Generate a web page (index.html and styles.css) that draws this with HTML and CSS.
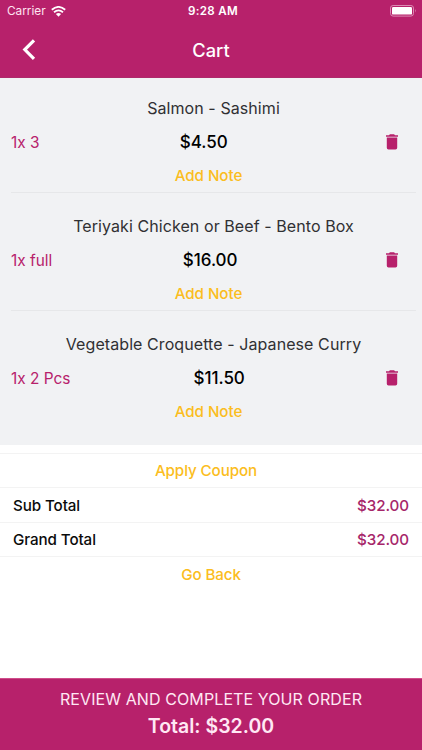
FILE: index.html
```html
<!DOCTYPE html>
<html lang="en">
<head>
<meta charset="utf-8">
<title>Cart</title>
<link rel="stylesheet" href="styles.css">
</head>
<body>
<svg class="defs" width="0" height="0"><symbol id="trash" viewBox="0 0 12 16"><path d="M0 1.2h3L3.9.3h4.2l.9.9h3v1.5H0zM.8 3.5h10.4v10.3q0 1.7-1.7 1.7h-7Q.8 15.5.8 13.8z"/></symbol></svg>
<header class="header">
  <div class="status">
    <div class="carrier"><span>Carrier</span>
      <svg class="wifi" width="15" height="11" viewBox="0 0 15 11"><path d="M.8 3.8Q7.5-2 14.2 3.8M3 6.2q4.5-3.7 9 0" fill="none" stroke="#fff" stroke-width="1.8"/><path d="M4.9 8.1q2.6-2 5.2 0L7.5 10.7z" fill="#fff"/></svg>
    </div>
    <span class="clock">9:28 AM</span>
    <svg class="battery" width="27" height="12" viewBox="0 0 27 12"><rect x=".5" y=".5" width="23" height="10.6" rx="2.6" fill="none" stroke="#dc8bb4"/><rect x="2" y="2" width="20" height="7.6" rx="1.2" fill="#fff"/><path d="M25 4q1.5 1.8 0 3.6z" fill="#dc8bb4"/></svg>
  </div>
  <div class="nav">
    <svg class="back" width="14" height="22" viewBox="0 0 14 22"><path d="M12 1.4L2.8 10.6l9.2 9.2" fill="none" stroke="#fff" stroke-width="3.2"/></svg>
    <h1 class="title">Cart</h1>
    <span></span>
  </div>
</header>
<main class="main">
  <section class="items">
    <article class="item">
      <h2 class="name">Salmon - Sashimi</h2>
      <div class="row"><span class="qty">1x 3</span><span class="price">$4.50</span><span class="remove"><svg width="12" height="16"><use href="#trash"/></svg></span></div>
      <div class="note">Add Note</div>
    </article>
    <article class="item">
      <h2 class="name">Teriyaki Chicken or Beef - Bento Box</h2>
      <div class="row"><span class="qty">1x full</span><span class="price">$16.00</span><span class="remove"><svg width="12" height="16"><use href="#trash"/></svg></span></div>
      <div class="note">Add Note</div>
    </article>
    <article class="item">
      <h2 class="name">Vegetable Croquette - Japanese Curry</h2>
      <div class="row"><span class="qty">1x 2 Pcs</span><span class="price">$11.50</span><span class="remove"><svg width="12" height="16"><use href="#trash"/></svg></span></div>
      <div class="note">Add Note</div>
    </article>
  </section>
  <section class="summary">
    <div class="coupon">Apply Coupon</div>
    <div class="line"><span>Sub Total</span><span class="amount">$32.00</span></div>
    <div class="line"><span>Grand Total</span><span class="amount">$32.00</span></div>
    <div class="goback">Go Back</div>
  </section>
</main>
<footer class="footer">
  <div class="review">REVIEW AND COMPLETE YOUR ORDER</div>
  <div class="total">Total: $32.00</div>
</footer>
</body>
</html>
```
FILE: styles.css
```css
* { box-sizing: border-box; }
body {
  margin: 0;
  width: 422px;
  height: 750px;
  overflow: hidden;
  display: flex;
  flex-direction: column;
  font-family: Inter, "Liberation Sans", sans-serif;
  font-feature-settings: "calt" 0;
  font-size: 15.2px;
  color: #0b0b0b;
  background: #fff;
}
.defs { display: block; height: 0; position: absolute; }
.header {
  height: 78px;
  background: #b7216b;
  color: #fff;
  border-bottom: 1px solid #ae2a6b;
}
.status {
  height: 22px;
  padding: 0 5px 0 7px;
  display: grid;
  grid-template-columns: 1fr auto 1fr;
  align-items: center;
  font-size: 12px;
}
.carrier { display: flex; align-items: center; gap: 5px; color: #ffe3f2; }
.carrier span { font-size: 11.8px; }
.clock { font-weight: 600; font-size: 11.6px; letter-spacing: .3px; padding-left: 2px; }
.battery { justify-self: end; }
.nav {
  height: 55px;
  padding: 0 22px;
  display: grid;
  grid-template-columns: 1fr auto 1fr;
  align-items: center;
}
.title { margin: 0; font-size: 18.3px; font-weight: 500; }
.main { flex: 1; }
.items { height: 367px; background: #f1f2f4; }
.item { position: relative; height: 118px; padding: 19px 6px 0 11px; }
.item:not(:last-child)::after {
  content: "";
  position: absolute;
  left: 11px;
  right: 6px;
  bottom: 3px;
  height: 1px;
  background: #e6e7e9;
}
.name {
  margin: 0;
  height: 22px;
  line-height: 22px;
  text-align: center;
  font-size: 16px;
  font-weight: 400;
  letter-spacing: .08px;
  color: #303033;
}
.row {
  height: 24px;
  margin-top: 11px;
  display: flex;
  justify-content: space-between;
  align-items: center;
}
.qty { color: #b7216b; font-size: 15.4px; }
.price { font-size: 17px; font-weight: 500; letter-spacing: -.05px; color: #000; }
.remove { width: 48px; display: flex; justify-content: center; fill: #b7216b; }
.note {
  height: 22px;
  margin-top: 11px;
  line-height: 22px;
  padding-right: 10px;
  text-align: center;
  font-weight: 500;
  letter-spacing: -.05px;
  color: #fbbd20;
}
.summary { padding-top: 8px; font-weight: 500; letter-spacing: -.1px; }
.coupon, .goback { text-align: center; color: #fbbd20; }
.coupon { height: 34px; line-height: 34px; padding-right: 10px; border-top: 1px solid #f3f3f3; }
.line {
  height: 35px;
  padding: 0 13px;
  display: flex;
  justify-content: space-between;
  align-items: center;
  border-top: 1px solid #f3f3f3;
}
.line + .line { height: 34px; }
.amount { color: #a6266a; }
.goback { height: 35px; line-height: 36px; border-top: 1px solid #f3f3f3; }
.footer {
  height: 72px;
  padding-top: 9px;
  text-align: center;
  background: #b7216b;
  color: #ffe8f4;
  border-top: 1px solid #cf4d8a;
}
.review { height: 22px; line-height: 22px; font-size: 16px; letter-spacing: .1px; }
.total { height: 32px; line-height: 32px; font-size: 19.5px; font-weight: 600; }
```
